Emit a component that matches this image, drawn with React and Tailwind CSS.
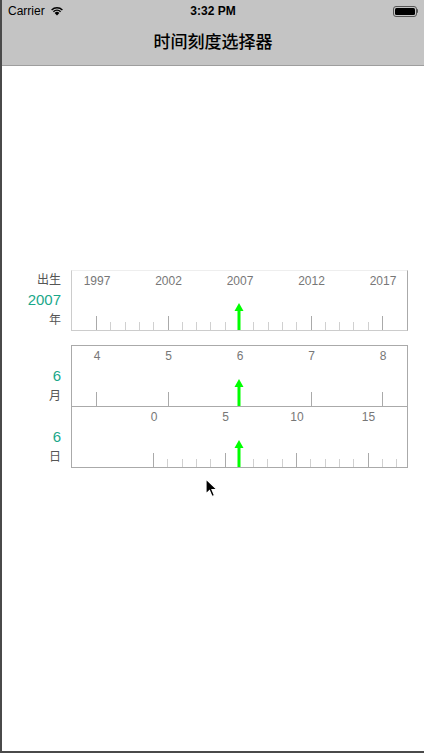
import React from "react";

const STEP = 14.3;

function Arrow({ x }) {
  return (
    <svg className="absolute bottom-0" style={{ left: x - 5 }} width="10" height="27" viewBox="0 0 10 27">
      <polygon points="5,0 9.5,8 0.5,8" fill="#00ff00" />
      <rect x="3.5" y="7" width="3" height="20" fill="#00ff00" />
    </svg>
  );
}

function Ruler({ ticks, labels, arrowX, className }) {
  return (
    <div className={"relative w-[337px] " + className}>
      {labels.map((l) => (
        <span
          key={l.text}
          className="absolute top-[3px] w-[40px] -translate-x-1/2 text-center text-[12px] leading-[14px] text-[#777]"
          style={{ left: l.x }}
        >
          {l.text}
        </span>
      ))}
      {ticks.map((t, i) => (
        <div
          key={i}
          className={"absolute bottom-0 w-px " + (t.major ? "h-[14px] bg-[#aaa]" : "h-[8px] bg-[#d0d0d0]")}
          style={{ left: t.x }}
        />
      ))}
      <Arrow x={arrowX} />
    </div>
  );
}

function SideLabel({ top, value, unit, className }) {
  return (
    <div className={"flex w-[59px] flex-col items-end " + className}>
      <span className="h-[20px] text-[12px] leading-[20px] text-[#555]">{top}</span>
      <span className="h-[20px] text-[15px] leading-[20px] text-[#1aa88a]">{value}</span>
      <span className="h-[20px] text-[12px] leading-[20px] text-[#555]">{unit}</span>
    </div>
  );
}

export default function App() {
  const yearTicks = [];
  for (let y = 1997; y <= 2017; y++) yearTicks.push({ x: 24 + (y - 1997) * STEP, major: (y - 1997) % 5 === 0 });
  const yearLabels = [1997, 2002, 2007, 2012, 2017].map((y) => ({ text: String(y), x: 25 + (y - 1997) * STEP }));

  const monthTicks = [4, 5, 7, 8].map((m) => ({ x: 24 + (m - 4) * 5 * STEP, major: true }));
  const monthLabels = [4, 5, 6, 7, 8].map((m) => ({ text: String(m), x: 25 + (m - 4) * 5 * STEP }));

  const dayTicks = [];
  for (let d = 0; d <= 17; d++) dayTicks.push({ x: 81 + d * STEP, major: d % 5 === 0 });
  const dayLabels = [0, 5, 10, 15].map((d) => ({ text: String(d), x: 82 + d * STEP }));

  return (
    <div
      className="relative flex h-[753px] w-[424px] flex-col border-b-2 border-l-2 border-[#4a4a4a] bg-white"
      style={{ fontFamily: '"Liberation Sans", "Noto Sans CJK SC", sans-serif' }}
    >
      <div className="flex h-[66px] flex-col border-b border-[#9e9e9e] bg-[#c4c4c4]">
        <div className="relative flex h-[22px] items-center px-[6px] text-[12px] text-black">
          <span>Carrier</span>
          <svg className="ml-[5px]" width="14" height="10" viewBox="0 0 14 10">
            <path d="M7 9.5 L4.6 6.9 A3.4 3.4 0 0 1 9.4 6.9 Z" fill="#000" />
            <path d="M2.9 5.2 A5.9 5.9 0 0 1 11.1 5.2 L10.1 6.2 A4.5 4.5 0 0 0 3.9 6.2 Z" fill="#000" />
            <path d="M1.1 3.4 A8.4 8.4 0 0 1 12.9 3.4 L11.9 4.4 A7 7 0 0 0 2.1 4.4 Z" fill="#000" />
          </svg>
          <span className="absolute left-1/2 -translate-x-1/2 font-bold">3:32 PM</span>
          <div className="ml-auto flex items-center">
            <div className="flex h-[11px] w-[24px] items-center rounded-[3px] border border-[#555] p-px">
              <div className="h-full w-full rounded-[1.5px] bg-black" />
            </div>
            <div className="h-[4px] w-[1.5px] rounded-r bg-[#555]" />
          </div>
        </div>
        <div className="flex flex-1 items-center justify-center pb-[1px] text-[17px] font-medium text-black">
          时间刻度选择器
        </div>
      </div>

      <div className="mt-[204px] flex">
        <SideLabel top="出生" value="2007" unit="年" />
        <Ruler
          className="ml-[10px] h-[61px] border-t border-r border-b border-l border-t-[#eee] border-r-[#aaa] border-b-[#ccc] border-l-[#ccc]"
          ticks={yearTicks}
          labels={yearLabels}
          arrowX={167}
        />
      </div>

      <div className="mt-[14px] flex">
        <SideLabel top="" value="6" unit="月" className="pt-[1px]" />
        <Ruler className="ml-[10px] h-[62px] border border-[#aaa]" ticks={monthTicks} labels={monthLabels} arrowX={167} />
      </div>
      <div className="-mt-px flex">
        <SideLabel top="" value="6" unit="日" className="pt-[1px]" />
        <Ruler className="ml-[10px] h-[62px] border border-[#aaa]" ticks={dayTicks} labels={dayLabels} arrowX={167} />
      </div>

      <svg className="absolute left-[203px] top-[478px]" width="14" height="20" viewBox="0 0 14 20">
        <path d="M1 1 L1 16 L4.5 12.5 L7 18.5 L9.5 17.5 L7 11.5 L12 11.5 Z" fill="#000" stroke="#fff" strokeWidth="1.2" />
      </svg>
    </div>
  );
}
